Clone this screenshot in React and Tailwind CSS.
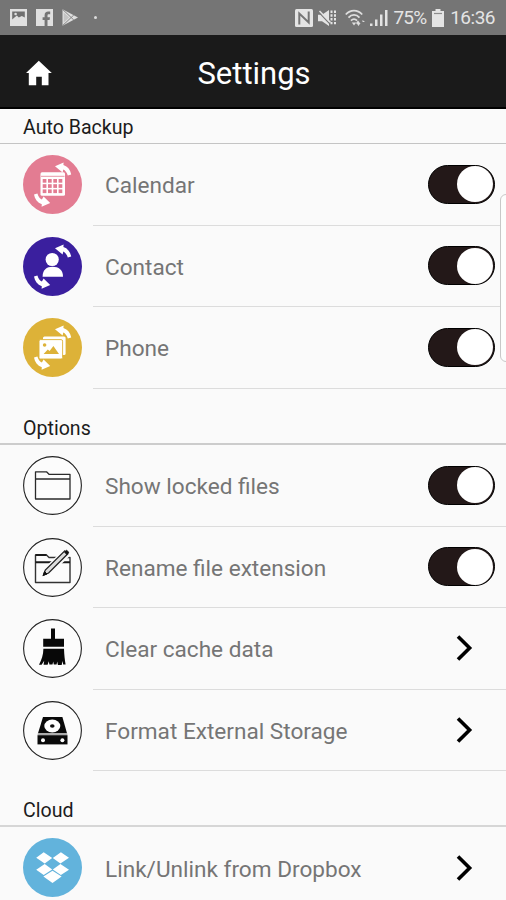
import React from 'react';

// curved arrows shared by the backup icons
function SyncArrows() {
  return (
    <g fill="#fff">
      <path d="M32 11.2 L40.6 7.4 L40.4 10 C44.8 11.4 47.4 15 48.200 19.600 L44.800 20.500 C43.800 17.400 42.200 15.500 40.300 14.600 L39.600 17.400 Z" />
      <path d="M27.200 48 L18.600 51.800 L18.800 49.200 C14.400 47.600 11.800 44 11 39.400 L14.400 38.500 C15.400 41.800 17 43.700 18.900 44.500 L20.600 41.600 Z" />
    </g>
  );
}

function Ring() {
  return (
    <circle cx="29.5" cy="29.5" r="28.9" fill="#fcfcfc" stroke="#222" strokeWidth="1.1" />
  );
}

function CalendarIcon() {
  return (
    <svg width="59" height="59" viewBox="0 0 59 59">
      <circle cx="29.5" cy="29.5" r="29.5" fill="#e37c92" />
      <rect x="17.5" y="17.3" width="24.5" height="23.5" rx="1.5" fill="#fff" />
      <path d="M18 21.3h23.5" stroke="#e37c92" strokeWidth="0.8" />
      {[24, 29.2, 34.4].map((y) =>
        [19.7, 25, 30.3, 35.6].map((x) => (
          <rect key={`${x}-${y}`} x={x} y={y} width="3.7" height="3.7" fill="#e37c92" />
        ))
      )}
      <SyncArrows />
    </svg>
  );
}

function ContactIcon() {
  return (
    <svg width="59" height="59" viewBox="0 0 59 59">
      <circle cx="29.5" cy="29.5" r="29.5" fill="#3a1f9e" />
      <circle cx="29.2" cy="22.5" r="6.6" fill="#fff" />
      <path d="M19.6 39.8 C19.6 33 23.5 29.8 29.5 29.8 C35.8 29.8 40 33 40 39.8 Z" fill="#fff" />
      <SyncArrows />
    </svg>
  );
}

function PhoneIcon() {
  return (
    <svg width="59" height="59" viewBox="0 0 59 59">
      <circle cx="29.5" cy="29.5" r="29.5" fill="#ddb238" />
      <rect x="20" y="18.4" width="22.6" height="18.6" rx="1.5" fill="#fff" />
      <rect x="16" y="21.6" width="23.6" height="19.4" rx="1.5" fill="#fff" stroke="#ddb238" strokeWidth="0.9" />
      <circle cx="21.6" cy="27" r="1.8" fill="#ddb238" />
      <path d="M20.6 36 L24.8 31.5 L26.6 33 L30.4 28 L36 36 Z" fill="#ddb238" />
      <SyncArrows />
    </svg>
  );
}

function FolderIcon() {
  return (
    <svg width="59" height="59" viewBox="0 0 59 59">
      <Ring />
      <path d="M12.5 43 V15.8 H23.5 L26 18.3 H47 V43 Z M12.5 23 H47" fill="none" stroke="#2a2a2a" strokeWidth="1.3" strokeLinejoin="round" />
    </svg>
  );
}

function RenameIcon() {
  return (
    <svg width="59" height="59" viewBox="0 0 59 59">
      <Ring />
      <path d="M12.5 44.5 V17 H23.5 L26 19.5 H47 V44.5 Z" fill="none" stroke="#333" strokeWidth="1.4" strokeLinejoin="round" />
      <path d="M12.5 17 H23.5 M12.5 24.300 H47" stroke="#1a1a1a" strokeWidth="2" />
      <path d="M21.500 36 L23 31 L42 13 L45.500 16.500 L26.500 34.500 Z" fill="#fcfcfc" stroke="#fcfcfc" strokeWidth="4" />
      <path d="M20.5 37 L22.3 32 L41.800 12.8 L44.900 15.700 L25.6 35 Z" fill="#ddd" stroke="#222" strokeWidth="1.3" />
      <path d="M20.2 37.4 L21.6 33.6 L24 36 Z M41.600 14.200 L43.600 12.300 L45.800 14.300 L43.900 16.400 Z" fill="#111" stroke="#111" />
    </svg>
  );
}

function BrushIcon() {
  return (
    <svg width="59" height="59" viewBox="0 0 59 59">
      <Ring />
      <path d="M28 9.5 H32 V19.8 H41 V27.8 H20.2 V19.8 H28 Z" fill="#080808" />
      <path d="M20.4 29.8 H41 C41.2 36 41.8 41 42.600 45.4 H40.2 L39.4 42 L38.7 46 H34.9 L34.2 42.6 L33.6 45.6 H30.8 L30.2 42.4 L29.5 45.6 H26.4 L25.8 42.3 L24.6 45.8 H20.6 L21.2 41.8 L18.6 45.8 H16 C18.6 41 20.3 36 20.4 29.8 Z" fill="#080808" />
    </svg>
  );
}

function DriveIcon() {
  return (
    <svg width="59" height="59" viewBox="0 0 59 59">
      <Ring />
      <path d="M20 16 H39.4 L44 32.2 H15 Z" fill="#0a0a0a" />
      <path d="M14.5 34.2 H44.5 V43.4 H14.5 Z" fill="#0a0a0a" />
      <path d="M14.6 33.2 H44.4" stroke="#888" strokeWidth="1" />
      <ellipse cx="29.3" cy="25" rx="8" ry="6.5" fill="#fff" />
      <ellipse cx="29.3" cy="25" rx="2.3" ry="1.7" fill="#111" />
      <circle cx="20" cy="39.2" r="2" fill="#fff" />
      <circle cx="39.4" cy="39.2" r="2" fill="#fff" />
    </svg>
  );
}

function DropboxIcon() {
  return (
    <svg width="59" height="59" viewBox="0 0 59 59">
      <circle cx="29.5" cy="29.5" r="29.5" fill="#62b3dc" />
      <path
        d="M20.7 14.2 L29.2 20 L21.7 25.4 L13.2 19.7 Z M37.9 14.2 L46 19.7 L37.4 25.4 L29.8 20 Z M21.7 26.1 L29.2 31.4 L20.7 37 L13.2 31.8 Z M37.4 26.1 L46 31.8 L37.9 37 L29.8 31.4 Z M29.5 32.8 L38.6 38.6 L29.5 45 L20.4 38.6 Z"
        fill="#fff"
      />
    </svg>
  );
}

function Toggle() {
  return (
    <div className="flex h-[39px] w-[67px] items-center justify-end rounded-full border border-black bg-[#231818] pr-px">
      <div className="h-[36px] w-[36px] rounded-full bg-white" />
    </div>
  );
}

function Chevron() {
  return (
    <svg className="mr-[22px]" width="17" height="28" viewBox="0 0 17 28" fill="none">
      <path d="M2 2.4 L13.6 14 L2 25.6" stroke="#000" strokeWidth="3.6" />
    </svg>
  );
}

function Row({ icon, label, toggle, last }) {
  return (
    <div className="flex h-[81.5px] shrink-0 items-center pl-[23px]">
      <div className="w-[70px] shrink-0">{icon}</div>
      <div
        className={`flex h-full flex-1 items-center justify-between pr-[11px] pl-3 ${
          last ? '' : 'border-b border-[#dcdcdc]'
        }`}
      >
        <span className="pt-1 text-[22.6px] whitespace-nowrap text-[#757575]">{label}</span>
        {toggle ? <Toggle /> : <Chevron />}
      </div>
    </div>
  );
}

function SectionTitle({ children, className }) {
  return (
    <h2
      className={`flex shrink-0 items-end pl-[23px] text-[19.6px] leading-[23px] text-[#1c1c1c] ${className}`}
    >
      {children}
    </h2>
  );
}

function StatusBar() {
  return (
    <div className="flex h-[35px] shrink-0 items-center justify-between bg-[#757575] pr-[11px] pl-[10px] text-[#e4e4e4]">
      <div className="flex items-center gap-[9px]">
        <svg width="17" height="17" viewBox="0 0 17 17">
          <path d="M0 0h17v17H0z" fill="#e0e0e0" />
          <path d="M2.2 2.5h12.6v6l-3-1.5-3 1.5-2-2-4.6 4z" fill="#6f6f6f" />
          <circle cx="5.6" cy="5" r="1.3" fill="#e0e0e0" />
        </svg>
        <svg width="17" height="17" viewBox="0 0 17 17">
          <path d="M0 0h17v17H0z" fill="#e0e0e0" />
          <path d="M8.6 17v-6H6.6V8.2h2V6.4c0-2.6 1.4-3.8 3.6-3.8h2v2.6h-1.4c-1 0-1.3.5-1.3 1.3v1.7H14l-.4 2.8h-2.1v6z" fill="#757575" />
        </svg>
        <svg width="17" height="17" viewBox="0 0 17 17">
          <path d="M.5.3 16 8.5.5 16.7z" fill="#dedede" />
          <path d="M.5.3 11.8 11M.5 16.7 11.8 6" stroke="#858585" strokeWidth="1" fill="none" />
          <path d="M1.8 3.5 7 8.5 1.8 13.5z" fill="#c4c4c4" />
        </svg>
        <span className="ml-[6px] h-[3px] w-[3px] rounded-full bg-[#dcdcdc]" />
      </div>
      <div className="flex items-center">
        <svg width="18" height="18" viewBox="0 0 18 18">
          <rect width="18" height="18" rx="1.5" fill="#e4e4e4" />
          <path d="M4.300 15.500V4.500L13.700 13.500V2.500" fill="none" stroke="#757575" strokeWidth="2" />
        </svg>
        <svg className="ml-[5px]" width="19" height="18" viewBox="0 0 19 18">
          <path d="M0 5.8h4L11 1v16L4 12.2H0z" fill="#e4e4e4" />
          <path d="M0 2.500 12 15" stroke="#757575" strokeWidth="1.100" />
          <path d="M1.500 2 12.500 13.500" stroke="#e4e4e4" strokeWidth="1.500" />
          <path d="M13.500 1.500v15M17 1.500v15" fill="none" stroke="#e4e4e4" strokeWidth="2" strokeDasharray="2.400 1.400" />
        </svg>
        <svg className="ml-[8px]" width="21" height="18" viewBox="0 0 21 18">
          <g fill="none" stroke="#dedede" strokeWidth="1.8">
            <path d="M.8 5.5C5.5.3 12.5.3 17.2 5.5" />
            <path d="M3.5 8.6c3.200-3.600 7.800-3.600 11 0" />
            <path d="M6 11.6c1.800-1.900 4.200-1.900 6 0" />
          </g>
          <path d="M9 16.5 6.800 13.500h4.400zM13 11.500l2.300 3h-4.600z" fill="#dedede" />
          <path d="M11.500 14h4l-2 3zM17.500 11l2.500 2h-2.500z" fill="#dedede" />
        </svg>
        <svg className="ml-[4px]" width="18" height="18" viewBox="0 0 18 18" fill="#e4e4e4">
          <path d="M0 14.5h2.500V17H0zM5 10.500h2.500V17H5zM10 5.500h2.500V17H10zM15 1h2.500v16H15z" />
        </svg>
        <span className="ml-[6px] pt-[2px] text-[19px] tracking-[-0.9px]">75%</span>
        <svg className="ml-[6px]" width="12" height="18" viewBox="0 0 12 18">
          <path d="M3.5 0h5v2H12v16H0V2h3.500z" fill="#e4e4e4" />
          <path d="M2 4.500h8" stroke="#8c8c8c" strokeWidth="1.2" />
        </svg>
        <span className="ml-[6px] pt-[2px] text-[19px] tracking-[-0.5px]">16:36</span>
      </div>
    </div>
  );
}

function Header() {
  return (
    <header className="grid h-[74px] shrink-0 grid-cols-[100px_1fr_100px] items-center border-b-2 border-black bg-[#1a1a1a]">
      <svg className="mt-[3px] ml-[26px]" width="26" height="26" viewBox="0 0 26 26">
        <path d="M12.8.8 25.8 13h-3.300v12.200h-6.700v-8.500h-5.600v8.500H2.800V13H0z" fill="#fff" />
      </svg>
      <h1 className="pt-[7px] pl-[2px] text-center text-[31px] text-white">Settings</h1>
    </header>
  );
}

function App() {
  return (
    <div className="relative flex h-[900px] w-[506px] flex-col overflow-hidden bg-[#fafafa] font-['Roboto',sans-serif]">
      <StatusBar />
      <Header />
      <SectionTitle className="h-[35px] border-b border-[#c4c4c4] pb-[4px]">Auto Backup</SectionTitle>
      <Row icon={<CalendarIcon />} label="Calendar" toggle />
      <Row icon={<ContactIcon />} label="Contact" toggle />
      <Row icon={<PhoneIcon />} label="Phone" toggle />
      <SectionTitle className="h-[56.5px] border-b-2 border-[#cccccc] pb-[3px]">Options</SectionTitle>
      <Row icon={<FolderIcon />} label="Show locked files" toggle />
      <Row icon={<RenameIcon />} label="Rename file extension" toggle />
      <Row icon={<BrushIcon />} label="Clear cache data" />
      <Row icon={<DriveIcon />} label="Format External Storage" />
      <SectionTitle className="h-[56px] border-b-2 border-[#d6d6d6] pb-[3px]">Cloud</SectionTitle>
      <Row icon={<DropboxIcon />} label="Link/Unlink from Dropbox" last />
      {/* edge panel handle */}
      <div className="absolute top-[194px] -right-[6px] h-[168px] w-[12px] rounded-l-[6px] border border-[#c8c8c8] bg-[#fdfdfd]" />
    </div>
  );
}

export default App;
